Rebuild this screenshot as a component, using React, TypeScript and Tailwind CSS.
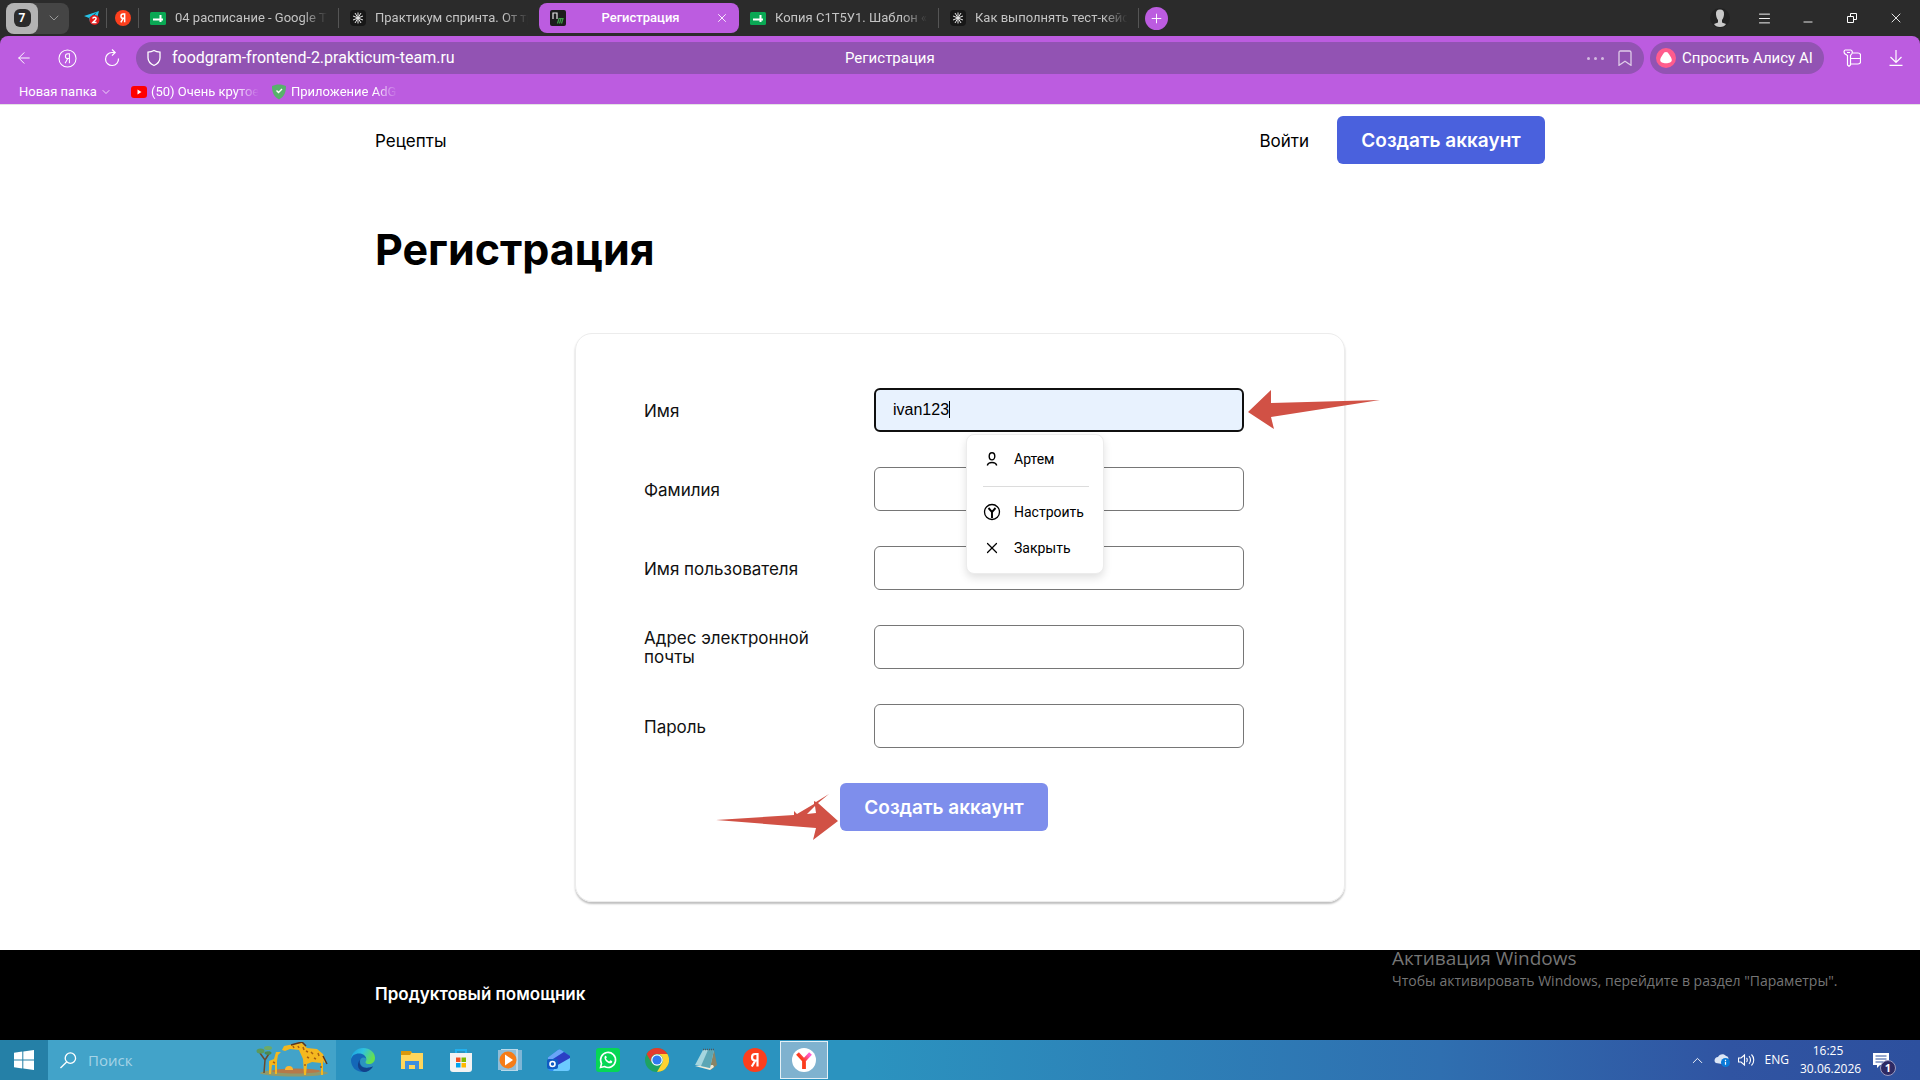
import React, { useState } from 'react';
import { Menu, Minus, X, Plus, ChevronDown, ChevronUp, ArrowLeft } from 'lucide-react';

const uiFont = "font-['Roboto','Noto_Sans',sans-serif]";
const systemFont = "font-['Open_Sans','Noto_Sans',sans-serif]";
const siteFont = "font-['Inter',sans-serif]";

/* ---------- Small icons ---------- */

const YaIcon: React.FC<{ className: string }> = ({ className }) => (
  <svg viewBox="0 0 24 24" className={className}>
    <circle cx="12" cy="12" r="12" fill="#fc3f1d" />
    <path d="M14.500 18.500V6h-2.300C10.300 6 9 7.200 9 9.200c0 2 1.200 3.300 3.200 3.300h2M12.300 12.500L8.800 18.500" fill="none" stroke="#fff" strokeWidth="2.200" />
  </svg>
);

const SheetsIcon = () => (
  <svg viewBox="0 0 16 13" className="w-4 h-[13px] shrink-0">
    <rect width="16" height="13" rx="1.500" fill="#0aa854" />
    <path d="M3 7.500h10M10.500 3v7" stroke="#fff" strokeWidth="2" />
  </svg>
);

const PracticumIcon = () => (
  <svg viewBox="0 0 16 16" className="w-4 h-4 shrink-0">
    <rect width="16" height="16" rx="4" fill="#171717" />
    <path d="M8 2.500v11M3 6l10 4M3 10l10-4M5 3l6 10M11 3L5 13" stroke="#e5e5e5" strokeWidth="1" />
  </svg>
);

const SiteIcon = () => (
  <svg viewBox="0 0 16 16" className="w-4 h-4 shrink-0">
    <rect width="16" height="16" rx="2" fill="#1c1c1c" />
    <path d="M3 9V3h4v6" fill="none" stroke="#e5e5e5" strokeWidth="1.200" />
    <path d="M7.500 13.500l1.500-5h4l-1.500 5M9.500 13.500l1.500-5" fill="none" stroke="#3f9e4a" strokeWidth="1.200" />
  </svg>
);

const TelegramIcon = () => (
  <svg viewBox="0 0 16 16" className="w-4 h-4">
    <path d="M0 6L15 1l-3 11-4-2-2 2-1-4z" fill="#27c4e8" />
    <path d="M5 8l8-6-6 7z" fill="#1a3b4a" />
    <circle cx="10.500" cy="10" r="5" fill="#e21b1b" />
    <path d="M8.800 8.600c.2-2 3.400-1.800 3.300.1 0 1.200-2 2.200-3.300 3.800h3.700" fill="none" stroke="#fff" strokeWidth="1.400" />
  </svg>
);

/* ---------- Browser ---------- */

const tabs = [
  { title: '04 расписание - Google Та', icon: <SheetsIcon /> },
  { title: 'Практикум спринта. От тр', icon: <PracticumIcon /> },
  { title: 'Регистрация', icon: <SiteIcon />, active: true },
  { title: 'Копия С1Т5У1. Шаблон «О', icon: <SheetsIcon /> },
  { title: 'Как выполнять тест-кейс -', icon: <PracticumIcon /> },
];

const TabStrip = () => (
  <div className="h-9 bg-[#2b2b2b] flex items-center text-[13px] text-[#c4c4c4]">
    <div className="ml-1.5 w-[63px] h-[31px] rounded-lg bg-[#454545] flex items-center">
      <button className="w-8 h-full rounded-lg bg-[#b3b3b3] flex items-center justify-center">
        <span className="w-[17px] h-[18px] rounded-md bg-[#2b2b2b] text-white text-[12px] font-bold leading-[18px]">7</span>
      </button>
      <button aria-label="Группы вкладок" className="flex-1 flex justify-center">
        <ChevronDown size={16} strokeWidth={1.5} className="text-[#9a9a9a]" />
      </button>
    </div>
    <button aria-label="Telegram" className="w-[38px] h-5 pl-[15px] border-r border-[#555] flex items-center"><TelegramIcon /></button>
    <button aria-label="Яндекс" className="w-8 h-5 border-r border-[#555] flex items-center justify-center"><YaIcon className="w-4 h-4" /></button>
    {tabs.map((tab, i) =>
      tab.active ? (
        <div key={tab.title} className="w-[200px] h-[30px] rounded-lg bg-[#bc5ce0] text-white flex items-center pl-[11px] pr-2.5">
          {tab.icon}
          <button className="flex-1 text-center font-medium">{tab.title}</button>
          <button aria-label="Закрыть вкладку"><X size={14} strokeWidth={1.5} /></button>
        </div>
      ) : (
        <button
          key={tab.title}
          className={`w-[200px] h-5 pl-[11px] pr-1 flex items-center gap-[9px] text-left ${i === 1 ? '' : 'border-r border-[#555]'}`}
        >
          {tab.icon}
          <span className="flex-1 min-w-0 whitespace-nowrap [mask-image:linear-gradient(to_right,black_80%,transparent_96%)]">
            {tab.title}
          </span>
        </button>
      )
    )}
    <button aria-label="Новая вкладка" className="ml-1.5 w-[23px] h-[23px] rounded-full bg-[#bc5ce0] text-white flex items-center justify-center">
      <Plus size={15} strokeWidth={1.5} />
    </button>
    <div className="ml-auto mr-0.5 flex items-center text-white">
      <button aria-label="Профиль" className="w-11 flex justify-center">
        <svg viewBox="0 0 20 20" className="w-5 h-5">
          <circle cx="10" cy="10" r="10" fill="#222" />
          <path d="M10 1.500c3 0 4.300 1.800 4 5-.2 2.500-1 4.500-2 5.500v2.500l4 1.500c-1 2-3 3-6 3s-5-1-6-3l4-1.500V12C7 11 6.200 9 6 6.500c-.3-3.200 1-5 4-5z" fill="#c8c8c8" />
        </svg>
      </button>
      <button aria-label="Меню" className="w-11 flex justify-center"><Menu size={15} strokeWidth={1.5} /></button>
      <button aria-label="Свернуть" className="w-11 pt-2 flex justify-center"><Minus size={14} strokeWidth={1.5} /></button>
      <button aria-label="Восстановить" className="w-11 flex justify-center">
        <svg viewBox="0 0 10 10" className="w-2.5 h-2.5 overflow-visible" fill="none" stroke="currentColor">
          <path d="M.5 3.500h6v6h-6zM3.500 3.500v-3h6v6h-3" />
        </svg>
      </button>
      <button aria-label="Закрыть" className="w-11 flex justify-center"><X size={16} strokeWidth={1.3} /></button>
    </div>
  </div>
);

const Toolbar = () => (
  <div className="bg-[#2b2b2b]">
    <div className="bg-[#bc5ce0] rounded-t-lg text-white pt-1.5">
      <div className="h-8 flex items-center">
        <button aria-label="Назад" className="ml-[15px]"><ArrowLeft size={18} strokeWidth={1.3} /></button>
        <button aria-label="Яндекс" className="ml-[25px]">
          <svg viewBox="0 0 20 20" className="w-[19px] h-[19px]" fill="none" stroke="currentColor" strokeWidth="1.100">
            <circle cx="10" cy="10" r="9" />
            <path d="M12 15V5h-1.500C8.700 5 7.800 6 7.800 7.500S8.700 10 10.500 10H12M10.300 10L7.500 15" />
          </svg>
        </button>
        <button aria-label="Обновить" className="ml-[26px]">
          <svg viewBox="0 0 18 18" className="w-[18px] h-[18px]" fill="none" stroke="currentColor" strokeWidth="1.200">
            <path d="M15.500 9.500A6.500 6.500 0 1 1 9 3.500h3M9 .5l3.200 3L9 6.700" />
          </svg>
        </button>
        <div className="ml-[15px] flex-1 h-full rounded-full bg-[#9253b3] flex items-center pl-2.5 pr-3 text-[15px]">
          <svg viewBox="0 0 16 18" className="w-4 h-[18px]" fill="none" stroke="currentColor" strokeWidth="1.300">
            <path d="M8 1.500c1.800 1 3.600 1.500 6 1.700v5.600c0 3.500-2.300 6-6 7.700-3.700-1.700-6-4.200-6-7.700V3.200c2.400-.2 4.200-.7 6-1.700z" />
          </svg>
          <button className="ml-2.5 w-[280px] text-left text-[16px] whitespace-nowrap">foodgram-frontend-2.prakticum-team.ru</button>
          <div className="flex-1 pl-[393px] text-left">Регистрация</div>
          <button aria-label="Ещё" className="flex gap-1 opacity-60">
            <i className="w-[3px] h-[3px] rounded-full bg-white" />
            <i className="w-[3px] h-[3px] rounded-full bg-white" />
            <i className="w-[3px] h-[3px] rounded-full bg-white" />
          </button>
          <button aria-label="В закладки" className="ml-[14px] opacity-70">
            <svg viewBox="0 0 14 16" className="w-[14px] h-4" fill="none" stroke="currentColor" strokeWidth="1.300">
              <path d="M1 15.300V2.500C1 1.500 1.500 1 2.500 1h9c1 0 1.500.5 1.500 1.500v12.800l-6-4z" />
            </svg>
          </button>
        </div>
        <button className="ml-1.5 w-[174px] h-full rounded-full bg-[#9253b3] flex items-center gap-1.5 pl-1.5 text-[15px] whitespace-nowrap">
          <svg viewBox="0 0 20 20" className="w-5 h-5 shrink-0">
            <circle cx="10" cy="10" r="10" fill="#ff5c8d" />
            <path d="M10 4c1.500 0 2.200.8 3.200 2.500 1.200 2 2.600 3.800 2.600 5.500 0 2.200-2.600 3.200-5.800 3.200S4.200 14.200 4.200 12c0-1.700 1.400-3.500 2.600-5.500C7.800 4.800 8.500 4 10 4z" fill="#fff" />
          </svg>
          Спросить Алису AI
        </button>
        <button aria-label="Пароли" className="ml-[19px]">
          <svg viewBox="0 0 18 18" className="w-[18px] h-[18px]" fill="none" stroke="currentColor" strokeWidth="1.200">
            <path d="M2.200 1h5.600C9 1 9.700 3 9 4.500L7.500 6.500V16L6 17.300 4.500 16V6.500L1.500 4.500C.8 3 1 1 2.200 1zM4 3.500h3" />
            <path d="M9.500 4H15c1.500 0 2.500.8 2.500 2v7c0 1.200-1 2-2.500 2H7.800M7.800 9.500h9.700" />
          </svg>
        </button>
        <button aria-label="Загрузки" className="ml-7 mr-[17px]">
          <svg viewBox="0 0 14 16" className="w-[14px] h-4" fill="none" stroke="currentColor" strokeWidth="1.200">
            <path d="M7 0v12M1.500 7L7 12.500 12.500 7M.5 15.300h13" />
          </svg>
        </button>
      </div>
      <nav className="h-[30px] pt-1.5 flex items-center text-[13px]">
        <button className="ml-[19px] w-[93px] flex items-center justify-between whitespace-nowrap">
          Новая папка <ChevronDown size={12} strokeWidth={1.5} />
        </button>
        <a href="#youtube" className="ml-[19px] flex items-center gap-1 w-[127px]">
          <svg viewBox="0 0 16 12" className="w-4 h-3 shrink-0">
            <rect width="16" height="12" rx="3" fill="#f00" />
            <path d="M6.500 3.500v5l4-2.500z" fill="#fff" />
          </svg>
          <span className="flex-1 whitespace-nowrap [mask-image:linear-gradient(to_right,black_78%,transparent)]">(50) Очень крутое</span>
        </a>
        <a href="#adguard" className="ml-[13px] flex items-center gap-1 w-[127px]">
          <svg viewBox="0 0 16 16" className="w-4 h-4 shrink-0">
            <path d="M8 .5c2.500 0 5 .6 7 1.500 0 6-1.500 10.500-7 13.500C2.500 12.500 1 8 1 2 3 1.100 5.500.5 8 .5z" fill="#57b26b" />
            <path d="M5.500 6.500l2 2 3.500-3.500" fill="none" stroke="#fff" strokeWidth="1.400" />
          </svg>
          <span className="flex-1 whitespace-nowrap [mask-image:linear-gradient(to_right,black_78%,transparent)]">Приложение AdG</span>
        </a>
      </nav>
    </div>
  </div>
);

/* ---------- Site ---------- */

const fields = [
  { id: 'first_name', label: 'Имя', type: 'text' },
  { id: 'last_name', label: 'Фамилия', type: 'text' },
  { id: 'username', label: 'Имя пользователя', type: 'text' },
  { id: 'email', label: 'Адрес электронной почты', type: 'email' },
  { id: 'password', label: 'Пароль', type: 'password' },
];

const AutofillMenu = () => (
  <div className={`absolute z-10 left-[92px] top-[46px] w-[138px] h-[140px] bg-white rounded-lg border border-[#ececec] shadow-[0_4px_8px_rgba(0,0,0,0.12)] pl-4 pr-3.5 py-[7px] text-[14px] text-black ${uiFont}`}>
    <button type="button" className="h-[34px] flex items-center gap-[13px]">
      <svg viewBox="0 0 18 18" className="w-[18px] h-[18px]" fill="none" stroke="currentColor" strokeWidth="1.400">
        <ellipse cx="9" cy="6.300" rx="2.800" ry="3.600" />
        <path d="M4.300 15.500c.5-2.200 1.700-3 4.700-3s4.200.8 4.700 3" />
      </svg>
      Артем
    </button>
    <hr className="mt-[10px] mb-[7px] border-[#dcdcdc]" />
    <button type="button" className="h-9 flex items-center gap-[13px]">
      <svg viewBox="0 0 18 18" className="w-[18px] h-[18px]" fill="none" stroke="currentColor">
        <circle cx="9" cy="9" r="7.500" strokeWidth="1.300" />
        <path d="M5.500 5l3.500 4 3.500-4M9 8.500V15" strokeWidth="1.900" />
      </svg>
      Настроить
    </button>
    <button type="button" className="h-9 flex items-center gap-[13px]">
      <X size={18} strokeWidth={1.6} />
      Закрыть
    </button>
  </div>
);

const SignUpForm = () => {
  const [values, setValues] = useState<Record<string, string>>({ first_name: 'ivan123' });

  return (
    <form
      onSubmit={(e) => e.preventDefault()}
      className="mx-auto w-full max-w-[770px] rounded-[17px] border border-[#ececec] shadow-[0_2px_2px_rgba(0,0,0,0.25)] pt-[54px] pb-[70px] pl-[68px] pr-[100px] flex flex-col items-center gap-[35px]"
    >
      {fields.map((field, i) => (
        <div key={field.id} className="w-full h-11 flex items-center">
          <label htmlFor={field.id} className="w-[230px] pt-0.5 pr-12 text-[17px] leading-[19px] text-[#111]">{field.label}</label>
          <div className="relative flex-1">
            <input
              id={field.id}
              type={field.type}
              value={values[field.id] ?? ''}
              onChange={(e) => setValues({ ...values, [field.id]: e.target.value })}
              className={`block w-full h-11 rounded-md text-base text-black outline-none font-['Liberation_Sans',sans-serif] ${
                i === 0 ? 'border-2 border-[#101010] bg-[#e8f2fe] px-[17px]' : 'border border-[#767676] bg-white px-[18px]'
              }`}
            />
            {i === 0 && (
              <>
                <span className="absolute left-[75px] top-[13px] w-px h-[17px] bg-black" />
                <AutofillMenu />
                <svg viewBox="0 0 132 40" className="absolute left-full ml-1 top-0.5 w-[132px] h-10 max-w-none">
                  <path d="M0 22L23 0v13l109-3L23 27l3 12z" fill="#d15145" />
                </svg>
              </>
            )}
          </div>
        </div>
      ))}
      <div className="relative">
        <button className="w-52 h-12 pt-0.5 rounded-md bg-[#7e8eec] text-white text-[19px] font-semibold">Создать аккаунт</button>
        <svg viewBox="0 0 122 48" className="absolute right-full mr-0.5 top-2.5 w-[122px] h-12 max-w-none">
          <path fillRule="evenodd" d="M0 27l78-5 0-4 3 3 17-10v-3l2 1L113 1 102 10l20 18-25 19 3-12zM91 21l9-1-1-7z" fill="#d15145" />
        </svg>
      </div>
    </form>
  );
};

/* ---------- Taskbar ---------- */

const Giraffes = () => (
  <svg viewBox="0 0 74 36" className="w-[74px] h-9">
    <ellipse cx="38" cy="31" rx="34" ry="3.500" fill="#8f9a6c" />
    <ellipse cx="40" cy="29" rx="24" ry="2.500" fill="#b5794a" />
    <path d="M29 28a4 4 0 0 1 8 0z" fill="#ffb52e" />
    <path d="M8 31l1-13-5-7M9 18l5-8" stroke="#6b4a2c" strokeWidth="1.500" fill="none" />
    <ellipse cx="4.500" cy="9" rx="4" ry="2.500" fill="#5b9a5a" />
    <ellipse cx="12" cy="6" rx="4" ry="2" fill="#6daa66" />
    <ellipse cx="12" cy="11" rx="3.500" ry="1.800" fill="#4c8a50" />
    {/* calf */}
    <path d="M13 19l5-2 2-7 5 0-3 3-1 6v13h-2v-9h-3l-1 9h-2z" fill="#f4b81f" />
    {/* parent */}
    <path d="M26 8l2-4 5-1 13-2 5 5 10 1 6 5 3 8-2 1-1-3v15h-2V21l-9-1-5 2-1 11h-2l-1-16-4-9-9-1-5 2z" fill="#f4b81f" />
    <path d="M35 3l11-3 4 4M67 14l4 8" stroke="#5e351c" strokeWidth="1.500" fill="none" />
    <path d="M50 9l2 1M55 10l2 2M62 11l1 3M51 15l2 1M58 16l2 1M47 5l1 3M42 4l1 2M17 20l2 1M49 22v2M65 24v2M37 4l1 2" stroke="#a85f12" strokeWidth="1.500" />
  </svg>
);

const apps = [
  {
    name: 'Microsoft Edge',
    icon: (
      <svg viewBox="0 0 24 24" className="w-6 h-6">
        <defs>
          <linearGradient id="edge" x1="0" y1="0" x2="1" y2="0.400">
            <stop offset="0" stopColor="#1b9de2" /><stop offset="0.500" stopColor="#2fc2df" /><stop offset="1" stopColor="#66e04f" />
          </linearGradient>
        </defs>
        <path d="M0 11C1 4 6 0 12 0c7 0 12 4.500 12 10 0 4-3 6-6 6-3.500 0-4-1.500-3-3 1.500-2.500-.5-5-4-5C6 8 1 10 0 11z" fill="url(#edge)" />
        <path d="M0 12c.5-5 5-7 9-6.500 4 .4 6 3 6 5-2-2-6-1-6 3 0 5 5 8 13 5-2.500 3.700-6 5.500-10 5.500C5 24 0 19 0 12z" fill="#1467b8" />
        <path d="M9 12c-2 5 3 10.500 13 6.500-2.500 3.700-6 5.500-9 5.500-6-1-8-8-4-12z" fill="#12418a" />
      </svg>
    ),
  },
  {
    name: 'Проводник',
    icon: (
      <svg viewBox="0 0 24 24" className="w-6 h-6">
        <path d="M1 3h9l2 2h11v16H1z" fill="#ffd65c" />
        <path d="M1 3h9l2 1-2 3H1z" fill="#d9980c" />
        <path d="M5 21v-8h14v8h-4v-4H9v4z" fill="#3f8fdf" />
      </svg>
    ),
  },
  {
    name: 'Microsoft Store',
    icon: (
      <svg viewBox="0 0 24 24" className="w-6 h-6">
        <path d="M7 6V2h10v4" fill="none" stroke="#22b0ee" strokeWidth="2" />
        <path d="M1 5h22v16c0 2-1 3-3 3H4c-2 0-3-1-3-3z" fill="#f3f3f3" />
        <path d="M7 9.500h4.500V14H7z" fill="#f25022" /><path d="M12.500 9.500H17V14h-4.500z" fill="#7fba00" />
        <path d="M7 15h4.500v4.500H7z" fill="#00a4ef" /><path d="M12.500 15H17v4.500h-4.500z" fill="#ffb900" />
      </svg>
    ),
  },
  {
    name: 'Медиаплеер',
    icon: (
      <svg viewBox="0 0 24 24" className="w-6 h-6">
        <path d="M6 2h18v20H6z" fill="#7fb6d6" /><path d="M3 1h17v22H3z" fill="#b9d9ea" /><path d="M0 2h18v20H0z" fill="#8fbdd8" />
        <circle cx="10" cy="12" r="8.500" fill="#f57c17" /><path d="M7 6.500v11l8-5.500z" fill="#fff" />
      </svg>
    ),
  },
  {
    name: 'Outlook',
    icon: (
      <svg viewBox="0 0 24 24" className="w-6 h-6">
        <path d="M1 9.500L11 2c1-.8 2-.8 3 0l9 6v12c0 2-1 3-3 3H4c-2 0-3-1-3-3z" fill="#2b8cf0" />
        <path d="M1 9.500L11 2c1-.8 2-.8 3 0l3 2L1 14z" fill="#6aa5f7" />
        <path d="M3 13L17 4l6 4v3L10 18z" fill="#2b3fc4" />
        <path d="M9 18l14-8v10c0 2-1 3-3 3H6z" fill="#6ccbff" />
        <rect y="11" width="11" height="10" rx="2" fill="#0f5bc4" /><circle cx="5.500" cy="16" r="2.500" fill="none" stroke="#fff" strokeWidth="1.600" />
      </svg>
    ),
  },
  {
    name: 'WhatsApp',
    icon: (
      <svg viewBox="0 0 24 24" className="w-6 h-6">
        <rect width="24" height="24" rx="3" fill="#06d755" />
        <path d="M4.500 19.500l1-4A7.500 7.500 0 1 1 8.500 18.500z" fill="none" stroke="#fff" strokeWidth="1.600" />
        <path d="M9 8c1-.8 1.500.5 1.800 1.500L10 10.600c.7 1.500 1.700 2.300 3.300 2.900l1.100-1.200c1.500.6 2.300 1 1.600 2.100-2.500 3.300-9.500-2.900-7-6.400z" fill="#fff" />
      </svg>
    ),
  },
  {
    name: 'Google Chrome',
    icon: (
      <svg viewBox="0 0 24 24" className="w-6 h-6">
        <circle cx="12" cy="12" r="12" fill="#1ea362" />
        <path d="M1.600 6A12 12 0 0 1 22.400 6H12a6 6 0 0 0-5.200 9z" fill="#e33b2e" />
        <path d="M22.400 6A12 12 0 0 1 12 24l5.200-9A6 6 0 0 0 12 6z" fill="#fdd231" />
        <circle cx="12" cy="12" r="5.800" fill="#fff" /><circle cx="12" cy="12" r="4.600" fill="#2f7af0" />
      </svg>
    ),
  },
  {
    name: 'Блокнот',
    icon: (
      <svg viewBox="0 0 24 24" className="w-6 h-6">
        <path d="M20 2l3 15-6 5-3-3z" fill="#8a8466" />
        <path d="M1 18l15 4 4-3-1-2z" fill="#f0ecd8" />
        <path d="M9 2h11l-4 18-15-3z" fill="#a5d6df" /><path d="M14 2h6l-4 18-9-2z" fill="#5ba6b5" />
        <path d="M9 1.500h12" stroke="#555" strokeWidth="1.500" strokeDasharray="1 1" />
      </svg>
    ),
  },
  { name: 'Яндекс', icon: <YaIcon className="w-6 h-6" /> },
  {
    name: 'Яндекс Браузер',
    active: true,
    icon: (
      <svg viewBox="0 0 24 24" className="w-6 h-6">
        <defs>
          <linearGradient id="yb" x1="0" y1="1" x2="1" y2="0">
            <stop offset="0.500" stopColor="#fb3c1c" /><stop offset="0.900" stopColor="#ff5bd0" />
          </linearGradient>
        </defs>
        <circle cx="12" cy="12" r="12" fill="#fff" />
        <path d="M5.500 5.500l6.500 7 6.500-7M12 12v9" fill="none" stroke="url(#yb)" strokeWidth="3.800" />
      </svg>
    ),
  },
];

const Taskbar = () => (
  <div className={`h-10 flex items-center text-white bg-[linear-gradient(to_right,#2b93bf_0%,#2b93bf_45%,#2f6fb0_75%,#3054a2_90%,#2d509e_100%)] ${systemFont}`}>
    <button aria-label="Пуск" className="w-12 h-10 bg-[#2580a7] flex items-center justify-center">
      <svg viewBox="0 0 20 20" className="w-5 h-5" fill="#fff">
        <path d="M0 2.800L8.300 1.600v7.900H0zM9.300 1.500L20 0v9.500H9.300zM0 10.500h8.300v7.900L0 17.200zM9.300 10.500H20V20L9.300 18.500z" />
      </svg>
    </button>
    <label className="w-72 h-10 bg-[#42a3c9] flex items-center pl-3 pr-1.5">
      <svg viewBox="0 0 18 18" className="w-[17px] h-[17px] shrink-0" fill="none" stroke="#fff" strokeWidth="1.400">
        <circle cx="11" cy="6.500" r="5.500" /><path d="M7 10.500L.5 17" />
      </svg>
      <input type="search" aria-label="Поиск" placeholder="Поиск" className="ml-[11px] flex-1 min-w-0 bg-transparent text-[15px] outline-none placeholder:text-[#a5d3e6]" />
      <Giraffes />
    </label>
    <div className="ml-[3px] flex items-center gap-px">
      {apps.map((app) => (
        <button
          key={app.name}
          aria-label={app.name}
          className={`w-12 h-[38px] flex items-center justify-center ${app.active ? 'bg-[#7fb2cf] border border-[#e4f0f6]' : ''}`}
        >
          {app.icon}
        </button>
      ))}
    </div>
    <div className="ml-auto flex items-center">
      <button aria-label="Скрытые значки"><ChevronUp size={17} strokeWidth={1.3} /></button>
      <svg viewBox="0 0 17 14" className="ml-2 w-[17px] h-3.5">
        <path d="M2 10C-1 8 1 4 4 4c1-3 6-4 8-1 2 0 3 2 2 4l-6 4z" fill="#dce6f5" />
        <circle cx="11.500" cy="9.500" r="4.500" fill="#0a7ad8" /><path d="M11.500 8.800v3M11.500 6.800v1.200" stroke="#fff" strokeWidth="1.200" />
      </svg>
      <svg viewBox="0 0 17 14" className="ml-[7px] w-[17px] h-3.5" fill="none" stroke="#fff" strokeWidth="1.100">
        <path d="M.5 5H3l3.500-3v10L3 9H.5zM8.500 5c1 1 1 3 0 4M11 3.200c2 2 2 5.600 0 7.600M13.500 1.500c3 3 3 8 0 11" />
      </svg>
      <button className="ml-2.5 text-[12px]">ENG</button>
      <div className="ml-[11px] w-[56px] text-center text-[12px] leading-[18px] whitespace-nowrap">
        <div>16:25</div>
        <div>30.06.2026</div>
      </div>
      <button aria-label="Уведомления" className="relative ml-[17px] mr-[31px] w-4 h-[15px]">
        <svg viewBox="0 0 16 15" className="w-4 h-[15px]">
          <path d="M0 0h16v12H7l-3 3v-3H0z" fill="#fff" /><path d="M2.500 3h11M2.500 6h11M2.500 9h8" stroke="#2d509e" />
        </svg>
        <span className="absolute left-[7px] top-[7px] w-4 h-4 rounded-full border border-[#9a9ac0] bg-[#2e2a63] text-[11px] font-bold leading-[14px]">1</span>
      </button>
    </div>
  </div>
);

export default function App() {
  return (
    <div className={`min-h-screen flex flex-col bg-white ${uiFont}`}>
      <TabStrip />
      <Toolbar />

      <div className={`flex-1 flex flex-col border-t border-[#e3e3e3] text-black ${siteFont}`}>
        <header className="mx-auto w-full max-w-[1170px] h-[70px] flex items-center text-[17px]">
          <a href="#recipes" className="pt-1">Рецепты</a>
          <a href="#signin" className="ml-auto pt-1">Войти</a>
          <button className="ml-7 w-52 h-12 pt-0.5 rounded-md bg-[#4a61dd] text-white text-[19px] font-semibold">Создать аккаунт</button>
        </header>

        <main className="mx-auto w-full max-w-[1170px] pt-[50px] pb-[47px]">
          <h1 className="mb-[60px] text-[43px] leading-[48px] font-bold">Регистрация</h1>
          <SignUpForm />
        </main>

        <footer className="relative mt-auto h-[90px] bg-black text-white">
          <div className="mx-auto w-full max-w-[1170px] h-[90px] flex items-center">
            <a href="#home" className="text-[17px] font-semibold">Продуктовый помощник</a>
          </div>
          <div className={`absolute right-[74px] top-[-4px] w-[454px] whitespace-nowrap text-[#757575] ${systemFont}`}>
            <p className="text-[19px] leading-[24px]">Активация Windows</p>
            <p className="text-[14px] leading-[22px]">Чтобы активировать Windows, перейдите в раздел "Параметры".</p>
          </div>
        </footer>
      </div>

      <Taskbar />
    </div>
  );
}
